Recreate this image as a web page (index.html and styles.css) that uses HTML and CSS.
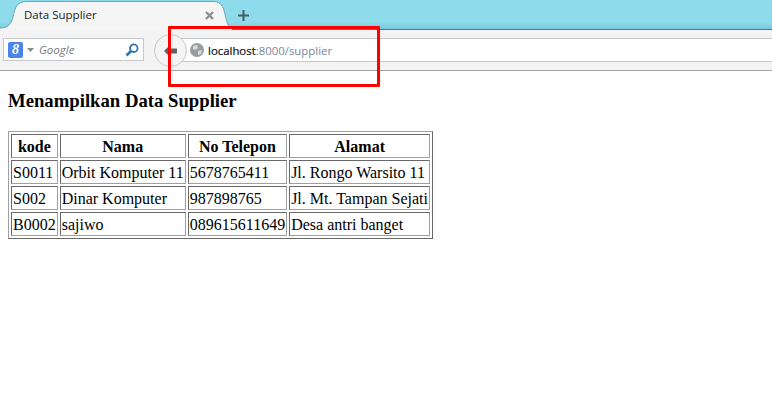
FILE: index.html
```html
<!DOCTYPE html>
<html lang="id">
<head>
<meta charset="utf-8">
<title>Data Supplier</title>
<link rel="stylesheet" href="styles.css">
</head>
<body>
<header class="chrome">
  <div class="tabstrip">
    <div class="tab">
      <svg class="tab-shape" width="232" height="30" viewBox="0 0 232 30"><path d="M0 30 L0 28 C7 28 11 25 13 17 C15 7 17 2 26 1.5 L214 1.5 C221 2 223 6 225 14 C227 24 229 28 232 29 L232 30 Z" fill="#f5f5f5"/><path d="M0 28 C7 28 11 25 13 17 C15 7 17 2 26 1.5 L214 1.5 C221 2 223 6 225 14 C227 24 229 28 232 29" fill="none" stroke="#6fa5b3" stroke-width="1"/></svg>
      <span class="tab-title">Data Supplier</span>
      <svg class="tab-close" width="9" height="9" viewBox="0 0 9 9"><path d="M1 1 L8 8 M8 1 L1 8" stroke="#8b8f92" stroke-width="2.4"/></svg>
    </div>
    <svg class="newtab" width="11" height="11" viewBox="0 0 11 11"><path d="M5.5 0 V11 M0 5.5 H11" stroke="#4f5a60" stroke-width="2"/></svg>
  </div>
  <div class="toolbar">
    <div class="search">
      <span class="g-icon">8</span>
      <svg class="caret" width="7" height="4" viewBox="0 0 7 4"><path d="M0 0 H7 L3.5 4 Z" fill="#8a8a8a"/></svg>
      <span class="search-text">Google</span>
      <svg class="lens" width="14" height="14" viewBox="0 0 14 14"><circle cx="8.8" cy="5.2" r="3.8" fill="none" stroke="#2f74b5" stroke-width="1.8"/><path d="M6 8 L1.5 12.5" stroke="#2f74b5" stroke-width="2.6"/></svg>
    </div>
    <div class="urlwrap">
      <div class="urlbar">
        <svg class="globe" width="14" height="14" viewBox="0 0 14 14"><circle cx="7" cy="7" r="7" fill="#9a9da0"/><path d="M3 3 L7 2 L8 5 L5 7 L3 6 Z M8 8 L12 7 L11 11 L8 12 Z" fill="#d8dadb"/></svg>
        <span class="url"><span class="host">localhost</span>:8000/supplier</span>
      </div>
      <div class="back">
        <svg width="14" height="12" viewBox="0 0 14 12"><path d="M0 6 L6 0 V3.5 H13 V8.5 H6 V12 Z" fill="#5f6366"/></svg>
      </div>
    </div>
  </div>
</header>
<div class="annotation"></div>
<main class="content">
  <h3 class="heading">Menampilkan Data Supplier</h3>
  <table class="data">
    <tr><th>kode</th><th>Nama</th><th>No Telepon</th><th class="col-alamat">Alamat</th></tr>
    <tr><td>S0011</td><td>Orbit Komputer 11</td><td>5678765411</td><td>Jl. Rongo Warsito 11</td></tr>
    <tr><td>S002</td><td>Dinar Komputer</td><td>987898765</td><td>Jl. Mt. Tampan Sejati</td></tr>
    <tr><td>B0002</td><td>sajiwo</td><td>089615611649</td><td>Desa antri banget</td></tr>
  </table>
</main>
</body>
</html>
```
FILE: styles.css
```css
html, body { margin: 0; padding: 0; background: #fff; }
body { font-family: "Liberation Serif", serif; font-size: 16px; color: #000; overflow: hidden; }

.chrome { height: 71px; display: flex; flex-direction: column; font-family: "Open Sans", "Noto Sans", sans-serif; }
.tabstrip {
  height: 30px; flex: none; display: flex; align-items: center;
  background: linear-gradient(#8edbeb 0, #8edbeb 22px, #7cc8da 29px, #3f7f94 29px, #3f7f94 30px);
}
.tab { position: relative; width: 232px; height: 30px; flex: none; display: flex; align-items: center; justify-content: space-between; padding: 0 18px 0 24px; box-sizing: border-box; }
.tab-shape { position: absolute; left: 0; top: 0; }
.tab-title { position: relative; font-size: 11.5px; color: #222; margin-top: -1px; }
.tab-close { position: relative; margin-top: 1px; }
.newtab { margin: 1px 0 0 6px; }

.toolbar {
  flex: 1; display: flex; align-items: flex-start; gap: 10px; padding: 8px 0 0 3px;
  background: #f3f3f3; border-bottom: 1px solid #a3a3a3; box-sizing: border-box;
}
.search {
  width: 141px; height: 23px; flex: none; box-sizing: border-box; display: flex; align-items: center;
  background: #fff; border: 1px solid #c3c9cc; padding: 0 4px;
}
.g-icon {
  width: 15px; height: 16px; background: #4a86e8; color: #fff; border-radius: 2px; text-align: center;
  font: italic bold 14px/16px "Liberation Serif", serif; flex: none;
}
.caret { margin: 0 5px 0 4px; flex: none; }
.search-text { flex: 1; font-size: 11.5px; font-style: italic; color: #7b7b7b; }
.urlwrap { flex: 1; position: relative; height: 24px; }
.urlbar {
  height: 24px; box-sizing: border-box; margin-left: 14px; padding-left: 25px; display: flex; align-items: center; gap: 4px;
  background: #fff; border: solid #c3c9cc; border-width: 1px 0;
}
.globe { flex: none; margin-left: -3px; }
.url { font-size: 11.4px; color: #7a8899; }
.host { color: #111; -webkit-text-stroke: 0.2px #111; }
.back {
  position: absolute; left: 0; top: -4px; width: 33px; height: 33px; box-sizing: border-box;
  border: 1px solid #c6c9cb; border-radius: 50%; background: #f4f4f4;
  display: flex; align-items: center; justify-content: center;
}

.annotation {
  position: absolute; left: 168px; top: 26px; width: 212px; height: 61px; box-sizing: border-box;
  border: 3px solid #ff0000; border-radius: 1px;
}

.content { padding: 0 8px; }
.heading { font-size: 18.72px; font-weight: bold; margin: 19px 0; }
.data {
  border-collapse: separate; border-spacing: 2px;
  border: 1px solid; border-color: #a0a0a0 #696969 #696969 #a0a0a0;
}
.data th, .data td {
  padding: 3px 1px 1px; border: 1px solid; border-color: #696969 #a0a0a0 #a0a0a0 #696969;
}
.col-alamat { min-width: 137px; }
```
